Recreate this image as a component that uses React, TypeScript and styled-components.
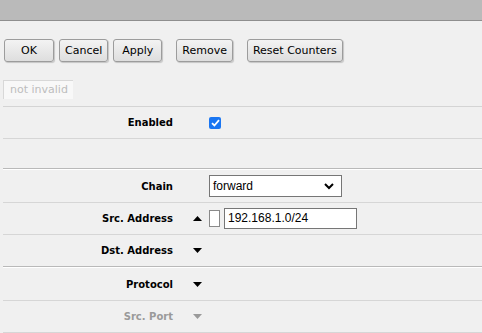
import React from 'react';
import styled, { createGlobalStyle } from 'styled-components';

const GlobalStyle = createGlobalStyle`
  html, body {
    margin: 0;
    padding: 0;
    background: #f0f0f0;
    font-family: "DejaVu Sans", Verdana, sans-serif;
    font-size: 11px;
    color: #000;
    overflow: hidden;
  }
`;

const TopBar = styled.div`
  height: 20px;
  background: #bababa;
  border-bottom: 1px solid #8e8e8e;
`;

const Toolbar = styled.div`
  display: flex;
  align-items: center;
  padding: 18px 0 0 4px;
`;

const Button = styled.button<{ $gap?: number; $width?: number }>`
  height: 23px;
  min-width: ${p => p.$width || 0}px;
  margin-left: ${p => p.$gap || 0}px;
  padding: 0 5px;
  font-family: "DejaVu Sans", Verdana, sans-serif;
  font-size: 11px;
  color: #000;
  background: linear-gradient(#f3f3f3, #dedede);
  border: 1px solid #9c9c9c;
  border-radius: 3px;
  box-shadow: 1px 1px 1px rgba(0, 0, 0, 0.18);
`;

const Status = styled.div`
  margin: 18px 0 0 3px;
  width: 70px;
  height: 19px;
  box-sizing: border-box;
  padding-left: 6px;
  line-height: 18px;
  color: #bdbdbd;
  background: #f8f8f8;
  border-left: 1px solid #d8d8d8;
  border-top: 1px solid #d8d8d8;
`;

const Form = styled.div`
  margin: 7px 0 0 3px;
  border-top: 1px solid #d4d4d4;
`;

const Row = styled.div<{ $height?: number; $last?: boolean }>`
  display: grid;
  grid-template-columns: 170px 36px 1fr;
  align-items: center;
  height: ${p => p.$height || 31}px;
  border-bottom: ${p => (p.$last ? 'none' : '1px solid #d6d6d6')};
`;

const Section = styled.div`
  border-top: 1px solid #b9b9b9;
  border-bottom: 1px solid #fff;
`;

const Label = styled.div<{ $muted?: boolean }>`
  text-align: right;
  font-size: 10px;
  font-weight: bold;
  color: ${p => (p.$muted ? '#9a9a9a' : '#000')};
`;

const Toggle = styled.div`
  display: flex;
  justify-content: flex-end;
  padding-right: 7px;
`;

const Value = styled.div`
  display: flex;
  align-items: center;
  gap: 4px;
`;

const Check = styled.div`
  width: 12px;
  height: 12px;
  border-radius: 2px;
  background: #1a76f2;
  display: flex;
  align-items: center;
  justify-content: center;
`;

const NotBox = styled.div`
  width: 11px;
  height: 17px;
  box-sizing: border-box;
  background: #fff;
  border: 1px solid #8a8a8a;
`;

const TextBox = styled.div`
  width: 133px;
  height: 21px;
  box-sizing: border-box;
  padding-left: 3px;
  background: #fff;
  border: 1px solid #767676;
  font-family: "Liberation Sans", Arial, sans-serif;
  font-size: 12px;
  line-height: 19px;
`;

const SelectBox = styled(TextBox)`
  height: 22px;
  line-height: 20px;
  display: flex;
  align-items: center;
  justify-content: space-between;
  padding-right: 7px;
`;

const Arrow = ({ up, muted }: { up?: boolean; muted?: boolean }) => (
  <svg width="9" height="5" viewBox="0 0 9 5">
    <path d={up ? 'M0 5 L4.5 0 L9 5 Z' : 'M0 0 L4.5 5 L9 0 Z'} fill={muted ? '#9a9a9a' : '#000'} />
  </svg>
);

export default function App() {
  return (
    <>
      <GlobalStyle />
      <TopBar />
      <Toolbar>
        <Button $width={50}>OK</Button>
        <Button $gap={5} $width={49}>Cancel</Button>
        <Button $gap={5} $width={49}>Apply</Button>
        <Button $gap={14}>Remove</Button>
        <Button $gap={14}>Reset Counters</Button>
      </Toolbar>
      <Status>not invalid</Status>
      <Form>
        <Row>
          <Label>Enabled</Label>
          <Toggle />
          <Value>
            <Check>
              <svg width="9" height="8" viewBox="0 0 9 8">
                <path d="M1 4.2 L3.4 6.5 L8 1.2" stroke="#fff" strokeWidth="1.8" fill="none" />
              </svg>
            </Check>
          </Value>
        </Row>
        <Row $height={29} $last />
        <Section />
        <Row $height={32}>
          <Label>Chain</Label>
          <Toggle />
          <Value>
            <SelectBox>
              <span>forward</span>
              <svg width="10" height="7" viewBox="0 0 10 7">
                <path d="M1 1 L5 5 L9 1" stroke="#000" strokeWidth="2" fill="none" />
              </svg>
            </SelectBox>
          </Value>
        </Row>
        <Row $height={31}>
          <Label>Src. Address</Label>
          <Toggle><Arrow up /></Toggle>
          <Value>
            <NotBox />
            <TextBox>192.168.1.0/24</TextBox>
          </Value>
        </Row>
        <Row $height={31} $last>
          <Label>Dst. Address</Label>
          <Toggle><Arrow /></Toggle>
          <Value />
        </Row>
        <Section />
        <Row $height={32}>
          <Label>Protocol</Label>
          <Toggle><Arrow /></Toggle>
          <Value />
        </Row>
        <Row $height={31}>
          <Label $muted>Src. Port</Label>
          <Toggle><Arrow muted /></Toggle>
          <Value />
        </Row>
      </Form>
    </>
  );
}
